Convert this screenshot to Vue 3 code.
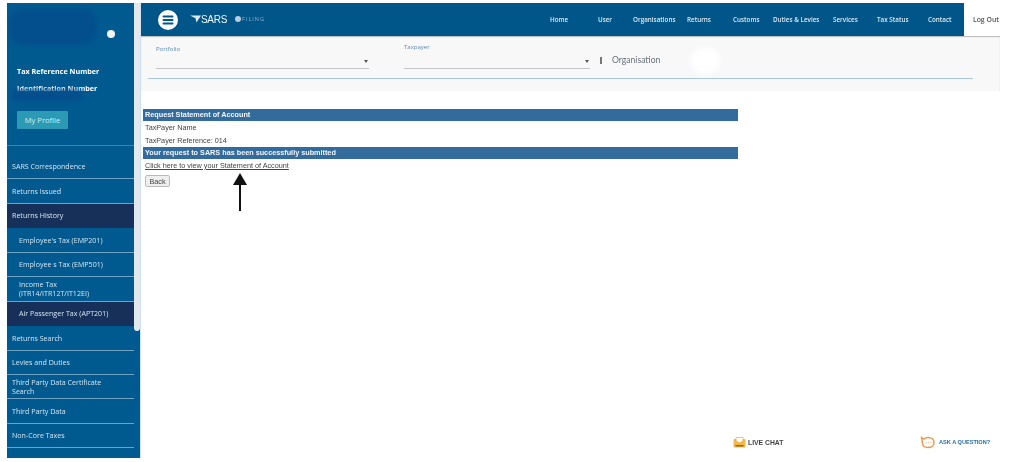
<template>
  <div class="page">
    <aside class="sidebar">
      <div class="profile">
        <div class="smudge smudge-top"></div>
        <span class="avatar-dot"></span>
        <div class="profile-label first">Tax Reference Number</div>
        <div class="profile-label second">Identification Number</div>
        <div class="smudge smudge-low"></div>
        <button class="profile-btn">My Profile</button>
      </div>
      <ul class="menu">
        <li
          v-for="item in menu"
          :key="item.label"
          :class="{ sub: item.sub, active: item.active, double: item.double }"
        >
          <span>{{ item.label }}</span>
        </li>
      </ul>
      <div class="thumb"></div>
    </aside>

    <main class="main">
      <header class="topbar">
        <div class="brand">
          <span class="burger">
            <svg width="12" height="10" viewBox="0 0 12 10">
              <rect x="0.5" y="0.5" width="11" height="2" rx="1" fill="#005689" />
              <rect x="0.5" y="4" width="11" height="2" rx="1" fill="#005689" />
              <rect x="0.5" y="7.5" width="11" height="2" rx="1" fill="#005689" />
            </svg>
          </span>
          <svg class="sars-mark" width="11" height="8" viewBox="0 0 11 8">
            <path d="M0 0.5H11L6.5 7.5L5.5 3.2Z" fill="#dfe9f1" />
          </svg>
          <span class="sars-name">SARS</span>
          <span class="filing-dot"></span>
          <span class="filing-name">FILING</span>
        </div>
        <nav class="nav">
          <a v-for="link in links" :key="link">{{ link }}</a>
        </nav>
        <div class="logout">Log Out</div>
      </header>

      <section class="filters">
        <div class="filter-row">
          <div class="field portfolio">
            <label>Portfolio</label>
            <div class="select"><span class="caret"></span></div>
          </div>
          <div class="field taxpayer">
            <label>Taxpayer</label>
            <div class="select"><span class="caret"></span></div>
          </div>
          <span class="divider"></span>
          <span class="org">Organisation</span>
          <span class="org-blob"></span>
        </div>
        <div class="rule"></div>
      </section>

      <section class="content">
        <div class="bar">Request Statement of Account</div>
        <div class="row">TaxPayer Name</div>
        <div class="row">TaxPayer Reference: 014</div>
        <div class="bar">Your request to SARS has been successfully submitted</div>
        <a class="link">Click here to view your Statement of Account</a>
        <button class="back">Back</button>
        <svg class="arrow" width="16" height="38" viewBox="0 0 16 38">
          <path d="M8 0L15 12H9V38H7V12H1Z" fill="#111" />
        </svg>
      </section>

      <footer class="footer">
        <span class="chat">
          <svg width="13" height="12" viewBox="0 0 13 12">
            <rect x="0.5" y="3" width="12" height="8.5" rx="1" fill="#f5b642" />
            <path d="M3 5V1.5H10V5L6.5 7Z" fill="#fff" stroke="#e9a93a" stroke-width="0.7" />
            <rect x="2.5" y="9" width="8" height="1.5" fill="#8a6a2e" />
          </svg>
          LIVE CHAT
        </span>
        <span class="ask">
          <svg width="15" height="13" viewBox="0 0 15 13">
            <path d="M1.5 1.5L4 3C5 2 6.5 1.5 8 1.5C11.5 1.5 14 3.5 14 6.5C14 9.5 11.5 11.5 8 11.5C5 11.5 2.8 10.2 2.5 7.5Z" fill="#fff" stroke="#f2934a" stroke-width="1.4" />
            <circle cx="6" cy="6.5" r="0.8" fill="#f8c9a0" />
            <circle cx="8.5" cy="6.5" r="0.8" fill="#f8c9a0" />
            <circle cx="11" cy="6.5" r="0.8" fill="#f8c9a0" />
          </svg>
          ASK A QUESTION?
        </span>
      </footer>
    </main>
  </div>
</template>

<script setup>
const menu = [
  { label: "SARS Correspondence" },
  { label: "Returns Issued" },
  { label: "Returns History", active: true },
  { label: "Employee's Tax (EMP201)", sub: true },
  { label: "Employee s Tax (EMP501)", sub: true },
  { label: "Income Tax (ITR14/ITR12T/IT12EI)", sub: true, double: true },
  { label: "Air Passenger Tax (APT201)", sub: true, active: true },
  { label: "Returns Search" },
  { label: "Levies and Duties" },
  { label: "Third Party Data Certificate Search", double: true },
  { label: "Third Party Data" },
  { label: "Non-Core Taxes" },
];

const links = [
  "Home",
  "User",
  "Organisations",
  "Returns",
  "Customs",
  "Duties & Levies",
  "Services",
  "Tax Status",
  "Contact",
];
</script>

<style>
html,
body {
  margin: 0;
  background: #fff;
  overflow: hidden;
}
</style>

<style scoped>
.page {
  display: flex;
  width: 993px;
  height: 455px;
  margin-left: 7px;
  padding-top: 3px;
  font-family: "Open Sans", sans-serif;
  filter: blur(0.55px);
  overflow: hidden;
}

.sidebar {
  position: relative;
  width: 133px;
  flex: none;
  background: #005a90;
  overflow: hidden;
}

.profile {
  position: relative;
  height: 143px;
  box-sizing: border-box;
  padding: 0 0 0 10px;
  border-bottom: 1px solid #3d82ad;
  margin-right: 6px;
  color: #fff;
}

.smudge {
  position: absolute;
  background: #034f8d;
  filter: blur(2.5px);
}

.smudge-top {
  left: 2px;
  top: 6px;
  width: 88px;
  height: 36px;
  border-radius: 14px;
}

.smudge-low {
  z-index: 2;
  left: 4px;
  top: 87px;
  width: 72px;
  height: 11px;
  border-radius: 6px;
}

.avatar-dot {
  position: absolute;
  left: 100px;
  top: 27px;
  width: 8px;
  height: 8px;
  border-radius: 50%;
  background: #f2f6f9;
}

.profile-label {
  position: relative;
  z-index: 1;
  font-size: 7.2px;
  font-weight: 700;
  line-height: 10px;
}

.profile-label.first {
  padding-top: 63px;
}

.profile-label.second {
  padding-top: 7px;
}

.profile-btn {
  position: relative;
  z-index: 3;
  display: block;
  margin-top: 18px;
  width: 51px;
  height: 18px;
  padding: 0;
  border: 0;
  border-radius: 1px;
  background: #2b9ab5;
  color: #d5ebf1;
  font: 400 7.6px "Open Sans", sans-serif;
}

.menu {
  list-style: none;
  margin: 9px 6px 0 0;
  padding: 0;
}

.menu li {
  display: flex;
  align-items: center;
  height: 24.45px;
  box-sizing: border-box;
  padding: 1px 12px 0 5px;
  border-bottom: 1.4px solid #6ea3c4;
  color: #d5e4ee;
  font-size: 7.1px;
  font-weight: 400;
  line-height: 9.5px;
}

.menu li.sub {
  padding-left: 12px;
}

.menu li.active {
  background: #17305a;
  border-bottom-color: #17305a;
}

.menu li.double span {
  display: block;
}

.thumb {
  position: absolute;
  right: 0;
  top: 0;
  width: 6px;
  height: 328px;
  border-radius: 0 0 3px 3px;
  background: #e4e8ec;
}

.main {
  flex: 1;
  display: flex;
  flex-direction: column;
  min-width: 0;
  border-left: 1px solid #cfe0ee;
}

.topbar {
  display: flex;
  align-items: center;
  height: 33px;
  flex: none;
  background: #005689;
  color: #dce8f0;
}

.brand {
  display: flex;
  align-items: center;
  width: 409px;
  padding-left: 17px;
  box-sizing: border-box;
}

.burger {
  display: flex;
  align-items: center;
  justify-content: center;
  width: 20px;
  height: 20px;
  border-radius: 50%;
  background: #fff;
}

.sars-mark {
  margin: -2px 0 0 12px;
}

.sars-name {
  margin: -1px 0 0 0;
  font: 400 10px "Liberation Sans", sans-serif;
  letter-spacing: -0.3px;
  color: #f0f5f8;
}

.filing-dot {
  width: 6px;
  height: 6px;
  margin: -2px 0 0 8px;
  border-radius: 50%;
  background: #b9cfdf;
}

.filing-name {
  margin: -2px 0 0 1px;
  font-size: 5.5px;
  letter-spacing: 1px;
  color: #8fb3cc;
}

.nav {
  display: grid;
  grid-template-columns: 48px 35px 54px 46px 40px 60px 44px 51px 36px;
  font-size: 6.3px;
  font-weight: 600;
  white-space: nowrap;
}

.logout {
  display: flex;
  align-items: center;
  justify-content: flex-end;
  width: 36px;
  height: 100%;
  margin-left: auto;
  padding-right: 1px;
  box-sizing: border-box;
  background: #fff;
  color: #555;
  font-size: 6.9px;
  font-weight: 600;
}

.filters {
  flex: none;
  height: 55px;
  box-sizing: border-box;
  padding: 0 27px 0 7px;
  background: #f8f8f8;
  box-shadow: inset 0 1px 1px #b9b9b9;
}

.filter-row {
  position: relative;
  display: flex;
  align-items: flex-start;
  height: 40px;
  padding-left: 8px;
}

.field label {
  display: block;
  font-size: 6px;
  line-height: 8px;
  color: #5b8db5;
}

.field .select {
  position: relative;
  box-sizing: border-box;
  border-bottom: 1px solid #c4c4c4;
}

.portfolio {
  width: 213px;
  padding-top: 9px;
}

.portfolio .select {
  height: 16px;
}

.taxpayer {
  width: 186px;
  margin-left: 35px;
  padding-top: 7px;
}

.taxpayer .select {
  height: 18px;
}

.caret {
  position: absolute;
  right: 1px;
  bottom: 5px;
  border: 2.5px solid transparent;
  border-top: 3px solid #555;
  border-bottom: 0;
}

.divider {
  width: 2px;
  height: 7px;
  margin: 21px 0 0 10px;
  background: #777;
}

.org {
  margin: 19px 0 0 10px;
  font: 400 8.6px/11px Lato, sans-serif;
  color: #67707a;
}

.org-blob {
  position: absolute;
  left: 542px;
  top: 12px;
  width: 30px;
  height: 26px;
  border-radius: 50%;
  background: #fff;
  filter: blur(3px);
}

.rule {
  height: 1px;
  margin-top: 2px;
  background: #a8c6dd;
}

.content {
  position: relative;
  display: flex;
  flex-direction: column;
  align-items: flex-start;
  width: 595px;
  margin: 18px 0 0 2px;
  font-family: "Liberation Sans", sans-serif;
  font-size: 7.25px;
  color: #444;
}

.bar {
  box-sizing: border-box;
  width: 100%;
  height: 12px;
  padding-left: 2px;
  background: #336c9c;
  color: #f2f6fa;
  font-weight: 700;
  line-height: 12px;
}

.row {
  padding-left: 2px;
  height: 13px;
  line-height: 13px;
}

.link {
  margin: 1px 0 0 2px;
  line-height: 12px;
  text-decoration: underline;
  color: #444;
}

.back {
  margin: 3px 0 0 2px;
  width: 25px;
  height: 12px;
  padding: 0;
  border: 1px solid #bbb;
  border-radius: 2px;
  background: #eee;
  color: #444;
  font: 400 7.25px "Liberation Sans", sans-serif;
}

/* annotation drawn over the screenshot */
.arrow {
  position: absolute;
  left: 89px;
  top: 64px;
}

.footer {
  display: flex;
  align-items: center;
  margin-top: auto;
  height: 26px;
  flex: none;
  padding-left: 592px;
  padding-bottom: 6px;
  box-sizing: border-box;
  font-family: "Liberation Sans", sans-serif;
  font-weight: 700;
}

.chat {
  display: flex;
  align-items: center;
  gap: 2px;
  width: 187px;
  font-size: 6.8px;
  color: #444;
}

.ask {
  display: flex;
  align-items: center;
  gap: 4px;
  font-size: 5.6px;
  color: #2a6ea3;
}
</style>
